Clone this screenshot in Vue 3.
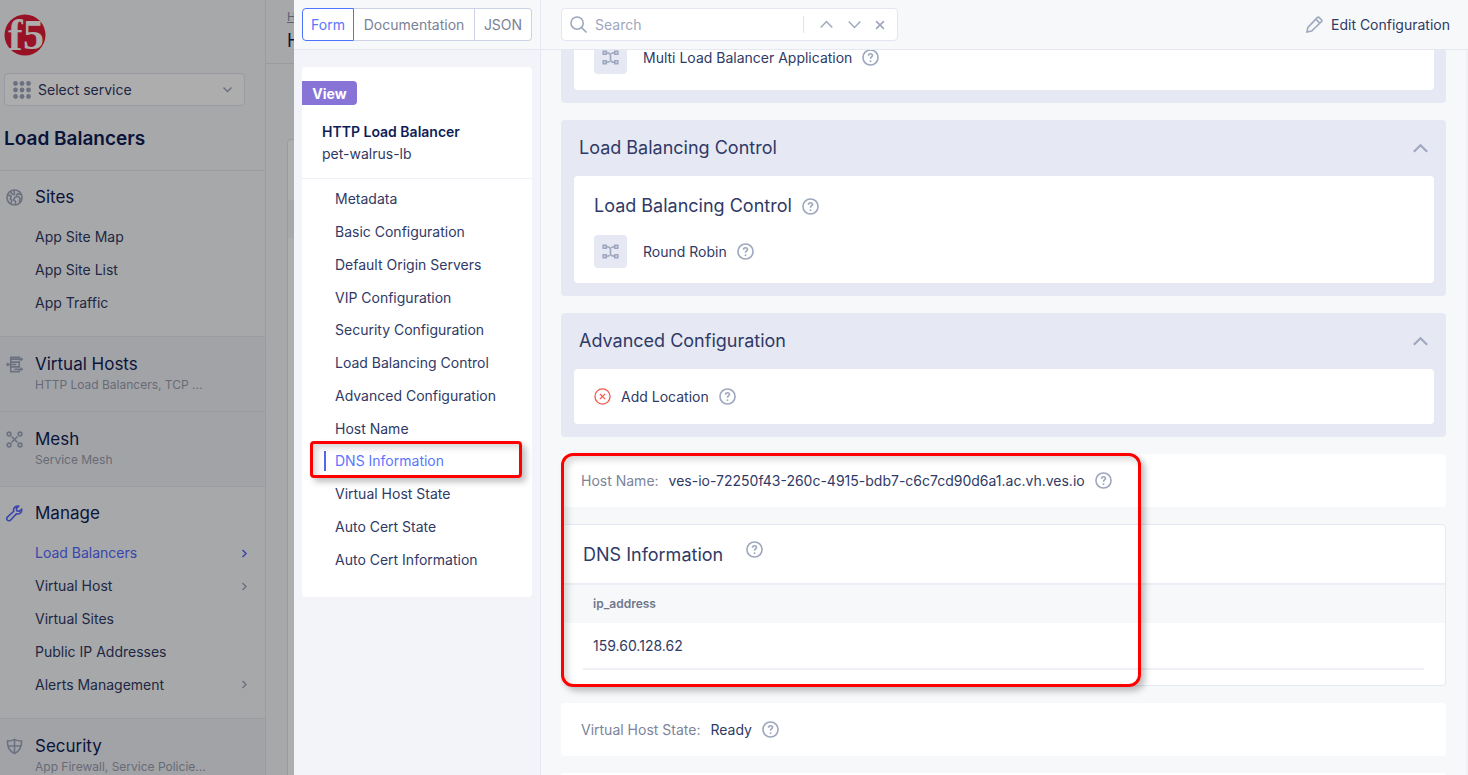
<script setup>
import { h } from 'vue'

const sections = [
  { id: 'sites', title: 'Sites', icon: 'globe', items: [{ label: 'App Site Map' }, { label: 'App Site List' }, { label: 'App Traffic' }] },
  { id: 'hosts', title: 'Virtual Hosts', icon: 'hosts', sub: 'HTTP Load Balancers, TCP ...' },
  { id: 'mesh', title: 'Mesh', icon: 'mesh', sub: 'Service Mesh' },
  {
    id: 'manage', title: 'Manage', icon: 'wrench', active: true, long: true,
    items: [
      { label: 'Load Balancers', active: true, more: true },
      { label: 'Virtual Host', more: true },
      { label: 'Virtual Sites' },
      { label: 'Public IP Addresses' },
      { label: 'Alerts Management', more: true }
    ]
  },
  { id: 'security', title: 'Security', icon: 'shield', sub: 'App Firewall, Service Policie...' }
]

const formNav = [
  'Metadata', 'Basic Configuration', 'Default Origin Servers', 'VIP Configuration',
  'Security Configuration', 'Load Balancing Control', 'Advanced Configuration', 'Host Name',
  'DNS Information', 'Virtual Host State', 'Auto Cert State', 'Auto Cert Information'
]
const current = 'DNS Information'

const icons = {
  globe: ['M9 1a8 8 0 1 0 0 16A8 8 0 0 0 9 1z', 'M1.500 7l2.500-.5 1.500 1.500-1 2.500 1.500 1.500-.5 3.500M5 2.500l1 2.500 2.500 1 .5-2-1-2.500M16 6l-3.500-1-2 2M9.500 8.500l3.500-.5 2 2-1 4M9.500 8.500l-1.500 3 2 1.500 0 3.500'],
  hosts: ['M5 3.500V1.500h9v2M17 3.500H5v3h9v-1.500M5 6.500v5h9v-5M5 11.500v5h9v-1.500M17 14h-8M1 9h10', 'M15.500 2L17 3.500 15.500 5M15.500 12.500L17 14l-1.500 1.500M2.500 7.500L1 9l1.500 1.500'],
  mesh: ['M3.200 1.200a2 2 0 1 0 0 4 2 2 0 0 0 0-4zM14.800 1.200a2 2 0 1 0 0 4 2 2 0 0 0 0-4zM3.200 12.800a2 2 0 1 0 0 4 2 2 0 0 0 0-4zM14.800 12.800a2 2 0 1 0 0 4 2 2 0 0 0 0-4z', 'M5.800 5.800l6.400 6.400M12.200 5.800l-6.400 6.400'],
  wrench: ['M16.500 4.500l-2.600 2.300-2.400-.6-.6-2.400L13.300 1.300C11 .8 8.300 2 8 4.800c0 .7 0 1.200.2 1.800L1.700 12.600c-1.200 1.200-1 2.700-.2 3.500.9.9 2.500.8 3.400-.2l6-6.500c.7.2 1.400.3 2.200.1C15.800 9.200 17 7 16.500 4.500z'],
  shield: ['M9 1.500C6.500 3 4 3.300 1.500 3.200 1.300 9.500 3.500 14 9 16.500 14.500 14 16.700 9.500 16.500 3.200 14 3.300 11.500 3 9 1.500z', 'M9 2v14M2 8.500h14'],
  tree: ['M1.300 2.500h3.200v3H1.300zM13.500 2.500h3.200v3h-3.200zM1.300 12.500h3.200v3H1.300zM13.500 12.500h3.200v3h-3.200z', 'M4.500 4c2.500 0 4.500.5 4.500 3v4c0 2.500 2 3 4.500 3M13.500 4c-1.800 0-3 .2-3.800 1M4.500 14c1.800 0 3-.2 3.800-1'],
  search: ['M7.500 1a6.500 6.500 0 1 0 0 13 6.500 6.500 0 0 0 0-13z', 'M12.300 12.300L17.500 17.500'],
  pencil: ['M1 17l1-5L12.200 1.500c.5-.5 1.100-.5 1.600 0l2.700 2.700c.5.5.5 1.100 0 1.600L6 16z', 'M10.500 3.500L14.500 7.500'],
  help: ['M9 1a8 8 0 1 0 0 16A8 8 0 0 0 9 1z', 'M6.900 7.100c0-1.300.9-2.100 2.100-2.100s2.100.8 2.100 1.900c0 1.500-2.100 1.600-2.100 3.300', 'M9 12v1.800'],
  cancel: ['M9 1a8 8 0 1 0 0 16A8 8 0 0 0 9 1z', 'M6.200 6.200l5.600 5.600M11.800 6.200l-5.600 5.600'],
  up: ['M1 13l8-8 8 8'],
  down: ['M1 5l8 8 8-8'],
  right: ['M5 2l7 7-7 7'],
  close: ['M2 2l14 14M16 2L2 16']
}

const Icon = (props) =>
  h('svg', { viewBox: '0 0 18 18', fill: 'none', stroke: 'currentColor', 'aria-hidden': 'true' },
    icons[props.name].map((d) => h('path', { d })))
Icon.props = ['name']
</script>

<template>
  <div class="app">
    <aside class="sidebar">
      <svg class="logo" viewBox="0 0 42 42" role="img" aria-label="f5">
        <circle cx="21" cy="21" r="20.500" fill="#e21a36" />
        <text x="4" y="36" class="logo-f">f</text>
        <text x="19" y="35" class="logo-5">5</text>
      </svg>
      <button class="service" type="button">
        <svg class="dots" viewBox="0 0 18 18" aria-hidden="true">
          <template v-for="r in 3" :key="r">
            <circle v-for="c in 3" :key="c" :cx="c * 6.500 - 4" :cy="r * 6.500 - 4" r="2.400" />
          </template>
        </svg>
        <span>Select service</span>
        <Icon name="down" class="ic chev" />
      </button>
      <h1>Load Balancers</h1>
      <section v-for="s in sections" :key="s.id" class="group" :class="{ folded: s.sub }">
        <h2>
          <Icon :name="s.icon" class="ic" :class="{ blue: s.active }" />
          {{ s.title }}
        </h2>
        <p v-if="s.sub">{{ s.sub }}</p>
        <ul v-else :class="{ long: s.long }">
          <li v-for="i in s.items" :key="i.label">
            <a href="#" :class="{ active: i.active }">{{ i.label }}<Icon v-if="i.more" name="right" class="ic chev" /></a>
          </li>
        </ul>
      </section>
    </aside>

    <div class="behind">
      <header>
        <a href="#">H</a>
        <strong>H</strong>
      </header>
      <div class="sheet"><div class="band"></div></div>
    </div>
    <div class="scrim"></div>

    <div class="drawer" role="dialog" aria-label="HTTP Load Balancer">
      <div class="left">
        <div class="bar">
          <div class="tabs">
            <button type="button" class="on">Form</button>
            <button type="button">Documentation</button>
            <button type="button">JSON</button>
          </div>
        </div>
        <div class="card nav">
          <span class="badge">View</span>
          <div class="object">
            <strong>HTTP Load Balancer</strong>
            <span>pet-walrus-lb</span>
          </div>
          <ul>
            <li v-for="n in formNav" :key="n" :class="{ current: n === current }">
              <a href="#">{{ n }}</a>
            </li>
          </ul>
        </div>
      </div>

      <main class="right">
        <div class="bar">
          <div class="search">
            <Icon name="search" class="ic" />
            <input type="text" placeholder="Search" aria-label="Search" />
            <button type="button" aria-label="Previous"><Icon name="up" class="ic" /></button>
            <button type="button" aria-label="Next"><Icon name="down" class="ic" /></button>
            <button type="button" aria-label="Clear"><Icon name="close" class="ic small" /></button>
          </div>
          <button type="button" class="edit"><Icon name="pencil" class="ic" />Edit Configuration</button>
        </div>

        <div class="scroll">
          <section class="panel first">
            <div class="card">
              <div class="row"><span class="tile"><Icon name="tree" class="ic" /></span>Multi Load Balancer Application<Icon name="help" class="ic help" /></div>
            </div>
          </section>

          <section class="panel">
            <h2>Load Balancing Control<Icon name="up" class="ic fold" /></h2>
            <div class="card">
              <h3>Load Balancing Control<Icon name="help" class="ic help" /></h3>
              <div class="row"><span class="tile"><Icon name="tree" class="ic" /></span>Round Robin<Icon name="help" class="ic help" /></div>
            </div>
          </section>

          <section class="panel">
            <h2>Advanced Configuration<Icon name="up" class="ic fold" /></h2>
            <div class="card line"><Icon name="cancel" class="ic red" />Add Location<Icon name="help" class="ic help" /></div>
          </section>

          <div class="marked">
            <div class="card field"><span>Host Name:</span>ves-io-72250f43-260c-4915-bdb7-c6c7cd90d6a1.ac.vh.ves.io<Icon name="help" class="ic help" /></div>
            <section class="card dns">
              <h3>DNS Information<Icon name="help" class="ic help" /></h3>
              <table>
                <thead><tr><th scope="col">ip_address</th></tr></thead>
                <tbody><tr><td><div>159.60.128.62</div></td></tr></tbody>
              </table>
            </section>
          </div>

          <div class="card field"><span>Virtual Host State:</span>Ready<Icon name="help" class="ic help" /></div>
          <div class="card field"></div>
        </div>
      </main>
    </div>
  </div>
</template>

<style>
body { margin: 0; overflow: hidden; }
</style>

<style scoped>
.app {
  position: relative;
  display: flex;
  height: 100vh;
  overflow: hidden;
  background: #f7f8fa;
  color: #2f3a66;
  font: 400 14px/20px Inter, "Liberation Sans", sans-serif;
}
.app *, .app *::after { box-sizing: border-box; }
ul { list-style: none; margin: 0; padding: 0; }
h1, h2, h3, p { margin: 0; }
a { color: inherit; text-decoration: none; }
button { font: inherit; color: inherit; border: 0; background: none; padding: 0; margin: 0; }
.ic { width: 17px; height: 17px; flex: none; color: #9ea7bd; stroke-width: 1.700; overflow: visible; }
.ic.chev { width: 9px; height: 9px; stroke-width: 3; margin-left: auto; }
.ic.help { margin-left: 10px; }

/* Service navigation */
.sidebar { width: 266px; flex: none; border-right: 1px solid #e6e8f0; }
.logo { display: block; width: 42px; height: 42px; margin: 14px 0 17px 4px; overflow: visible; }
.logo text { fill: #fff; font-family: "Liberation Serif", serif; font-weight: 700; }
.logo-f { font-size: 44px; }
.logo-5 { font-size: 42px; }
.service {
  display: flex; align-items: center; gap: 7px; width: 241px; height: 33px; margin-left: 4px;
  padding: 0 12px 0 8px; border: 1px solid #e0e4f0; border-radius: 4px; background: #fff;
}
.dots { width: 18px; height: 18px; fill: #9ea7bd; }
h1 { padding: 20px 4px 18px; color: #0f1e57; font-size: 19px; line-height: 26px; font-weight: 600; }
.group { border-top: 1px solid #e4e6ee; padding: 14px 16px 17px 6px; }
.group h2 { display: flex; align-items: center; gap: 12px; color: #0f1e57; font-size: 17px; line-height: 24px; }
.group p { padding-left: 29px; color: #9a9eb0; font-size: 12px; line-height: 18px; }
.group.folded { background: #eff1f6; padding-top: 15px; }
.group ul { display: flex; flex-direction: column; min-height: 98px; margin: 12px 0 0 29px; }
.group ul.long { min-height: 164px; }
.group li { flex: 1; display: flex; }
.group a { flex: 1; display: flex; align-items: center; }
.group .active, .group .active .ic, .ic.blue { color: #5468ff; }

/* Page under the drawer */
.behind { flex: 1; }
.behind header { height: 64px; padding: 8px 0 0 21px; border-bottom: 1px solid #e4e6ee; }
.behind header a { display: block; font-size: 12px; line-height: 18px; color: #8a90a6; text-decoration: underline; }
.behind header strong { display: block; font-size: 18px; line-height: 30px; font-weight: 400; color: #0f1e57; }
.sheet { margin: 75px 0 0 21px; height: 100%; padding-top: 60px; border: 1px solid #e0e4f0; border-radius: 4px; background: #fff; }
.band { height: 38px; background: #f7f8fa; }
.scrim { position: absolute; inset: 0; background: rgba(0, 0, 0, 0.32); }

/* Drawer */
.drawer { position: absolute; inset: 0 0 0 294px; display: flex; background: #f7f8fa; }
.bar { display: flex; align-items: center; height: 50px; flex: none; border-bottom: 1px solid #e6e8f1; background: #f7f8fa; position: relative; z-index: 1; }
.card { background: #fff; border-radius: 4px; }
.left { width: 247px; flex: none; background: #f2f4f9; border-right: 1px solid #e6e8f4; }
.left .bar { padding: 0 8px; }
.tabs { display: grid; grid-template-columns: 52px 1fr 57px; width: 230px; height: 33px; }
.tabs button { border: 1px solid #cdd3e5; border-left: 0; background: #fff; color: #7a8296; }
.tabs button:last-child { border-radius: 0 4px 4px 0; }
.tabs .on { border: 1px solid #4f73ff; border-radius: 4px 0 0 4px; color: #5a76ff; }
.nav { margin: 17px 8px 0; padding: 14px 0 21px; }
.badge {
  display: block; width: 55px; height: 24px; border-radius: 0 4px 4px 0; background: #8774d6; color: #fff;
  font-size: 14px; line-height: 25px; font-weight: 700; text-align: center;
}
.object { display: grid; padding: 16px 20px 13px; border-bottom: 1px solid #eef0f7; line-height: 22px; }
.object strong { color: #0f1e57; font-weight: 600; }
.nav ul { display: flex; flex-direction: column; min-height: 393px; margin-top: 4px; }
.nav li { flex: 1; display: flex; align-items: center; position: relative; padding-left: 22px; }
.nav li a { padding-left: 11px; }
.current a { color: #5a76ff; box-shadow: inset 2px 0 #4f6bea; }
.current::after {
  content: ""; position: absolute; inset: -4px 10px 0 8px; border: 3px solid #f00; border-radius: 4px;
  box-shadow: 4px 4px 6px rgba(0, 0, 0, 0.25), inset 4px 4px 6px rgba(0, 0, 0, 0.15);
}

.right { flex: 1; min-width: 0; overflow: hidden; }
.right .bar { justify-content: space-between; padding: 0 18px 0 20px; }
.search { display: flex; align-items: center; width: 337px; height: 33px; padding: 0 7px 0 8px; border: 1px solid #e3e6f2; border-radius: 4px; background: #fff; }
.search input { flex: 1; min-width: 0; height: 17px; margin: 0 8px 0 0; padding: 0 8px; border: 0; border-right: 1px solid #dfe3ee; outline: 0; background: none; font: inherit; color: #2f3a66; }
.search input::placeholder { color: #9ea7bd; opacity: 1; }
.search button { display: grid; place-items: center; width: 28px; height: 24px; }
.search button:last-child { width: 20px; margin-left: 2px; }
.search button .ic { width: 13px; height: 13px; stroke-width: 2; }
.search button .small { width: 10px; height: 10px; stroke-width: 3; }
.edit { display: flex; align-items: center; gap: 8px; }
.scroll { display: grid; gap: 17px; margin-top: -9px; padding: 0 20px; border-right: 2px solid #f0f2f6; }
.panel { padding: 0 12px 13px 13px; border-radius: 4px; background: #e6e8f4; }
.panel h2 { display: flex; align-items: center; justify-content: space-between; height: 56px; padding: 0 6px 0 5px; }
h2, h3 { font-size: 18px; line-height: 24px; font-weight: 400; }
.ic.fold { width: 15px; height: 15px; stroke-width: 2.500; }
.panel .card { padding: 18px 20px 15px; }
.panel.first .card { padding-top: 0; padding-bottom: 16px; }
h3 { display: flex; align-items: center; }
.panel h3 { margin-bottom: 17px; }
.row { display: flex; align-items: center; height: 33px; }
.tile { display: grid; place-items: center; width: 33px; height: 33px; margin-right: 16px; border-radius: 4px; background: #e6e8f4; }
.panel .card.line { display: flex; align-items: center; height: 55px; padding-top: 0; padding-bottom: 0; }
.ic.red { margin-right: 10px; color: #f4574a; stroke-width: 1.400; }
.marked { display: grid; gap: 17px; position: relative; }
.marked::after {
  content: ""; position: absolute; inset: -1px auto -1px 0; width: 580px; border: 3px solid #f00; border-radius: 12px;
  box-shadow: 4px 4px 6px rgba(0, 0, 0, 0.25), inset 4px 4px 6px rgba(0, 0, 0, 0.15);
}
.field { display: flex; align-items: center; height: 53px; padding: 0 20px; }
.field span { margin-right: 10px; color: #7d8499; }
.dns { border: 1px solid #e6e8f4; padding-bottom: 15px; }
.dns h3 { align-items: flex-start; height: 60px; padding: 16px 21px 0; border-bottom: 2px solid #eceef5; line-height: 28px; }
.dns h3 .help { margin-left: 23px; }
table { width: 100%; border-collapse: collapse; }
th { height: 38px; padding: 0 31px; background: #f7f8fa; color: #6f778c; font-size: 12px; font-weight: 600; text-align: left; }
td { padding: 0 21px; }
td div { height: 47px; padding: 0 10px; border-bottom: 2px solid #eef0f6; line-height: 46px; }
</style>
